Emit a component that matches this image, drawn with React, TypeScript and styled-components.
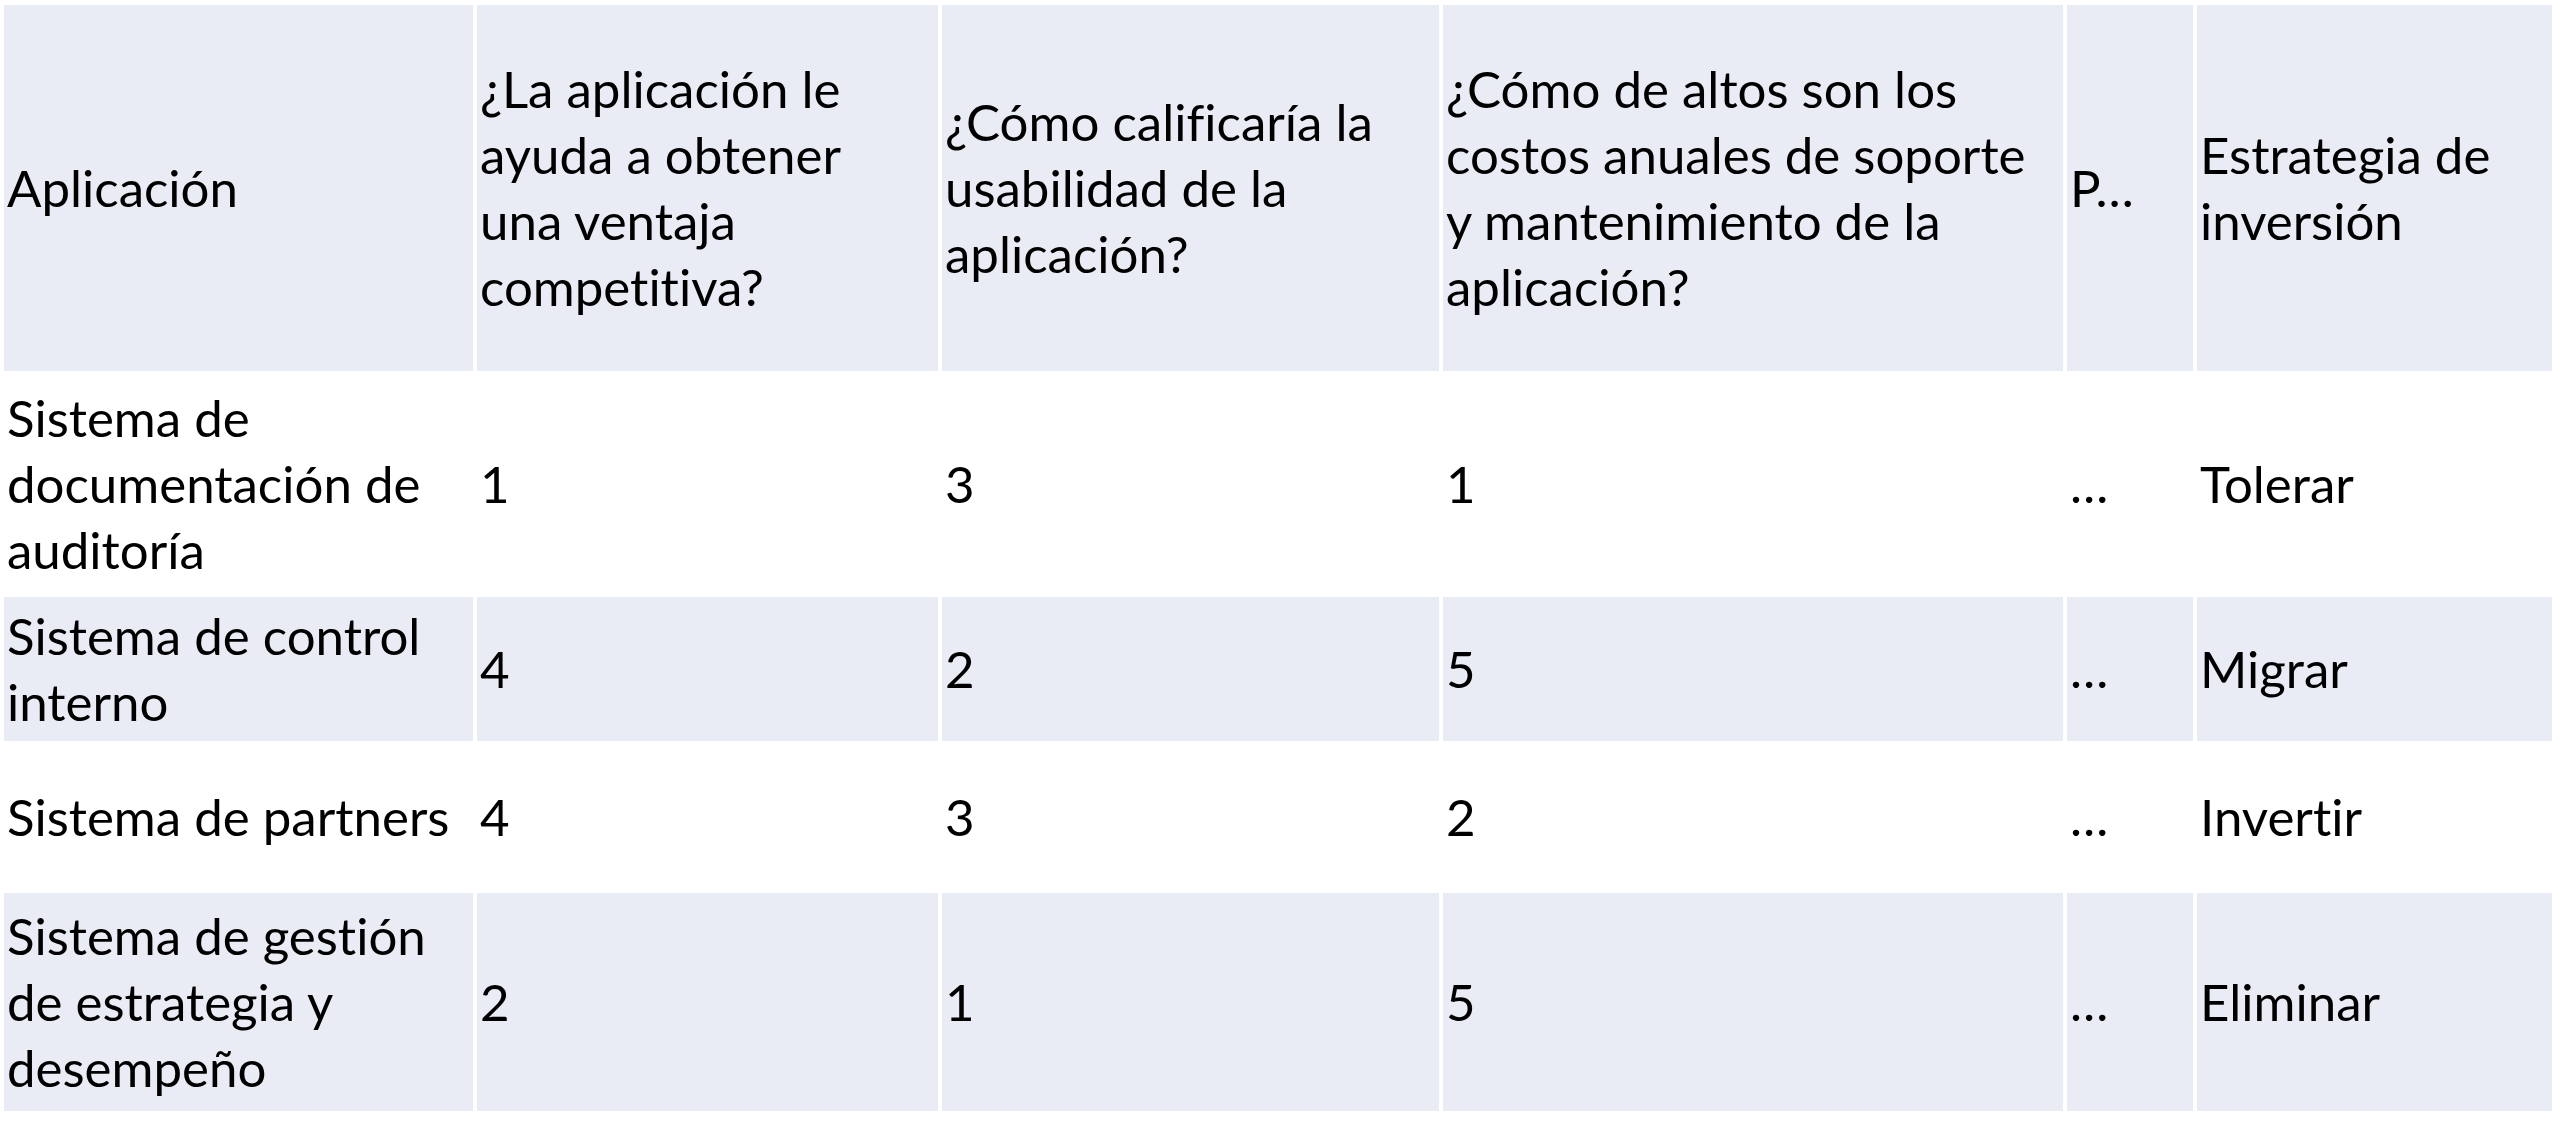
import styled, { createGlobalStyle } from "styled-components";

const GlobalStyle = createGlobalStyle`
    html, body {
        margin: 0;
        padding: 0;
        background: #ffffff;
    }
`;

// column widths taken from the slide table
const COLUMNS = "469px 461px 497px 620px 126px 355px";

const headers: string[][] = [
    ["Aplicación"],
    ["¿La aplicación le", "ayuda a obtener", "una ventaja", "competitiva?"],
    ["¿Cómo calificaría la", "usabilidad de la", "aplicación?"],
    ["¿Cómo de altos son los", "costos anuales de soporte", "y mantenimiento de la", "aplicación?"],
    ["P…"],
    ["Estrategia de", "inversión"],
];

const rows = [
    { name: ["Sistema de", "documentación de", "auditoría"], values: ["1", "3", "1", "…", "Tolerar"], height: 218, shaded: false },
    { name: ["Sistema de control", "interno"], values: ["4", "2", "5", "…", "Migrar"], height: 144, shaded: true },
    { name: ["Sistema de partners"], values: ["4", "3", "2", "…", "Invertir"], height: 144, shaded: false },
    { name: ["Sistema de gestión", "de estrategia y", "desempeño"], values: ["2", "1", "5", "…", "Eliminar"], height: 218, shaded: true },
];

const Lines = ({ lines }: { lines: string[] }) => (
    <CellText>
        {lines.map((line, i) => (
            <Line key={i}>{line}</Line>
        ))}
    </CellText>
);

const App = () => {
    return (
        <Page>
            <GlobalStyle />
            <Table>
                <Row $height={366}>
                    {headers.map((h, i) => (
                        <Cell key={i} $shaded>
                            <Lines lines={h} />
                        </Cell>
                    ))}
                </Row>
                {rows.map((row, r) => (
                    <Row key={r} $height={row.height}>
                        <Cell $shaded={row.shaded}>
                            <Lines lines={row.name} />
                        </Cell>
                        {row.values.map((v, i) => (
                            <Cell key={i} $shaded={row.shaded}>
                                <Lines lines={[v]} />
                            </Cell>
                        ))}
                    </Row>
                ))}
            </Table>
        </Page>
    );
};

const Page = styled.div`
    padding: 5px 0 0 4px;
    font-family: Lato, "Liberation Sans", sans-serif;
    color: #000000;
`;

const Table = styled.div`
    display: flex;
    flex-direction: column;
    gap: 4px;
    width: max-content;
`;

const Row = styled.div<{ $height: number }>`
    display: grid;
    grid-template-columns: ${COLUMNS};
    column-gap: 4px;
    height: ${(p) => p.$height}px;
`;

const Cell = styled.div<{ $shaded?: boolean }>`
    background: ${(p) => (p.$shaded ? "#e9ebf5" : "#ffffff")};
    display: flex;
    align-items: center;
    padding: 0 2px 0 3px;
    overflow: hidden;
`;

const CellText = styled.div`
    font-size: 51px;
    line-height: 66px;
    font-variant-ligatures: none;
`;

const Line = styled.div`
    white-space: nowrap;
`;

export default App;
